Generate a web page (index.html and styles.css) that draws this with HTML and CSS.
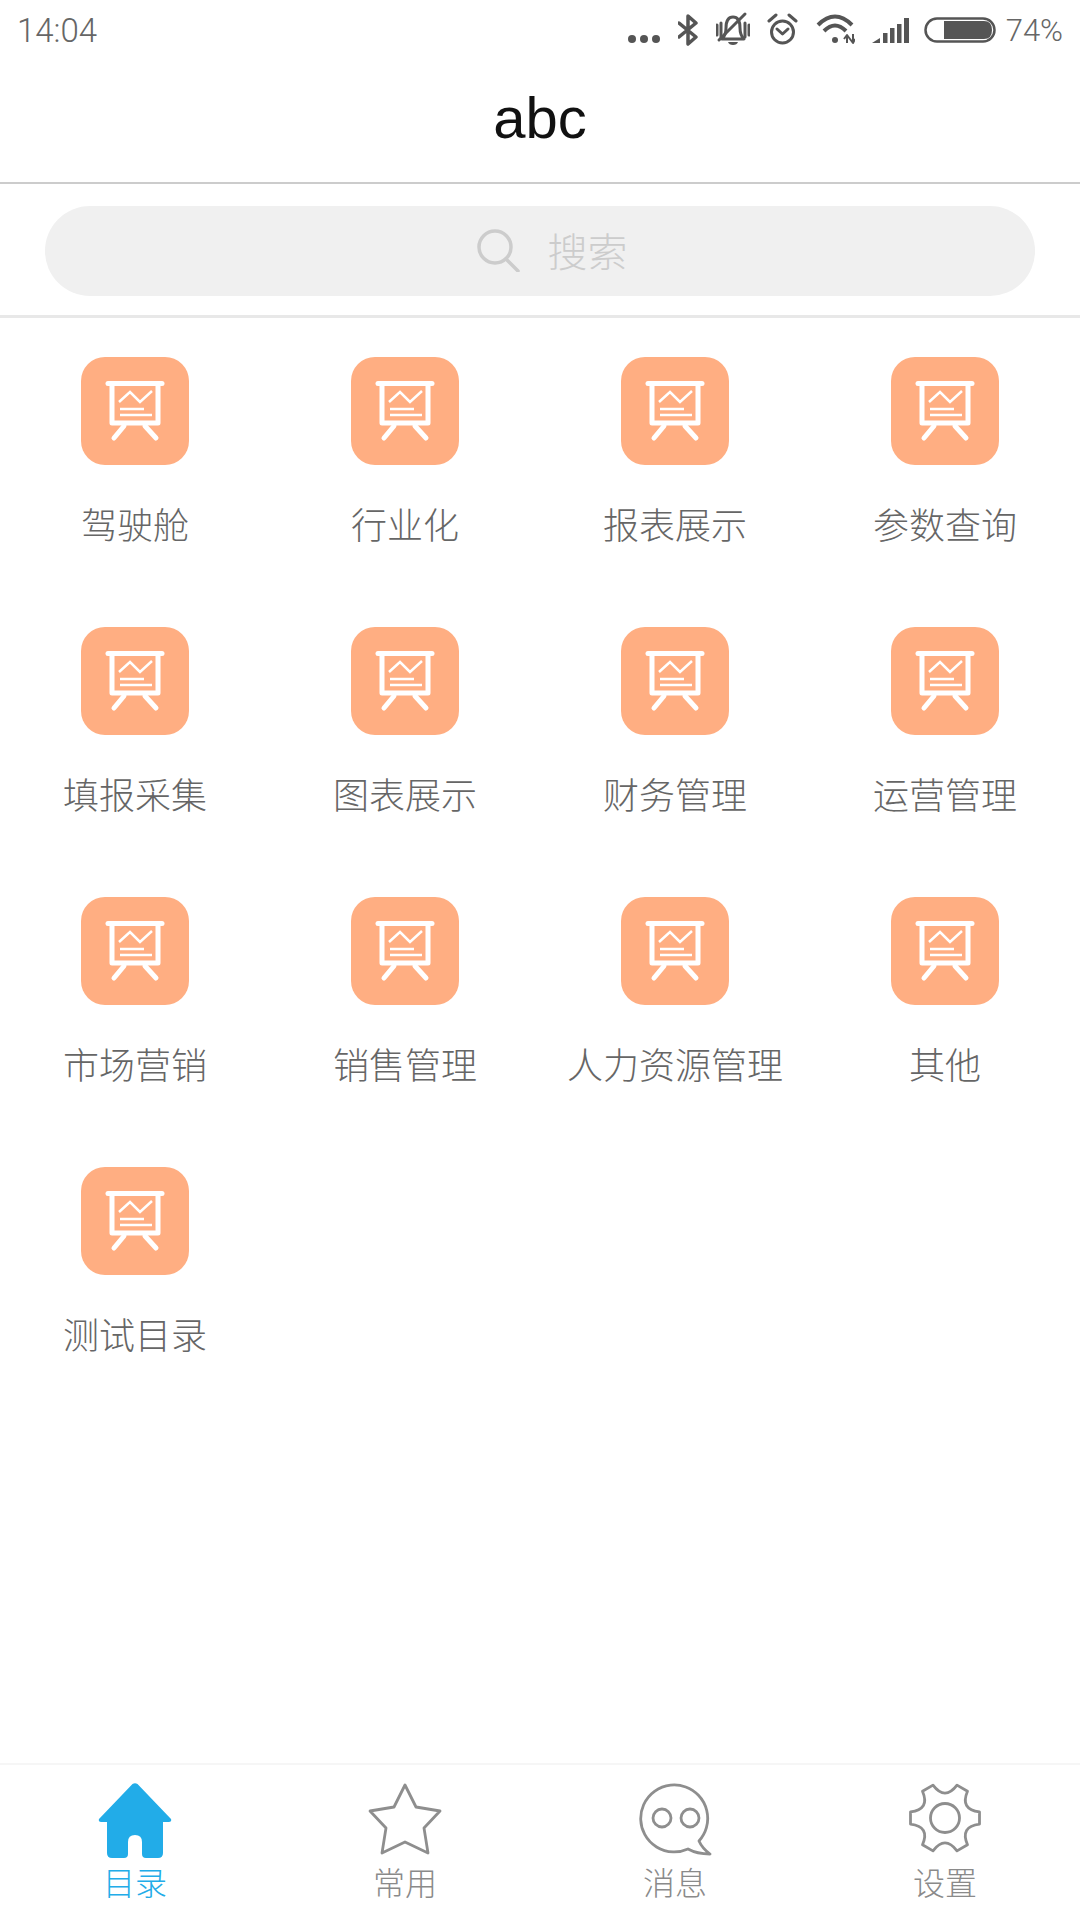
FILE: index.html
```html
<!DOCTYPE html>
<html lang="zh">
<head>
<meta charset="utf-8">
<title>abc</title>
<link rel="stylesheet" href="styles.css">
</head>
<body>
<svg class="defs" width="0" height="0" aria-hidden="true">
  <symbol id="board" viewBox="0 0 108 108">
    <path class="b-thick" d="M27 26.500H81"/>
    <path class="b-thick" d="M31 27V66H77V27"/>
    <path class="b-thick" d="M43 69L33 81M64 69L75 81"/>
    <path class="b-thin" d="M38 45L49 35L59 45L71 34"/>
    <path class="b-thin" d="M39 52H63M39 58H71"/>
  </symbol>
</svg>
<div class="app">
  <div class="status">
    <span class="time">14:04</span>
    <div class="status-icons">
      <svg class="si dots" width="32" height="60" viewBox="0 0 32 60"><circle cx="4" cy="39" r="4"/><circle cx="16" cy="39" r="4"/><circle cx="28" cy="39" r="4"/></svg>
      <svg class="si line bt" width="20" height="60" viewBox="0 0 20 60"><path d="M1 23L18 37L10 44V16L18 23L1 37"/></svg>
      <svg class="si line thin" width="34" height="60" viewBox="0 0 34 60"><path d="M6 39Q10 35 10 28Q10 17 17 17Q24 17 24 28Q24 35 28 39Z"/><path d="M3 40L29 14"/><path d="M1 25V35M33 25V35M5 23V37M29 23V37"/><path class="solid" d="M12 42H22Q21 45 17 45Q13 45 12 42Z"/></svg>
      <svg class="si line thin alarm" width="31" height="60" viewBox="0 0 31 60"><circle cx="15.5" cy="32" r="11"/><path d="M2 21L9 15M22 15L29 21"/><path d="M10 29L15.5 34L21 29"/></svg>
      <svg class="si line wifi" width="39" height="60" viewBox="0 0 39 60"><path d="M2 25Q19 8 36 25"/><path d="M8 31Q19 20 30 31"/><circle class="solid" cx="19" cy="40" r="3"/><path class="arrows" d="M31 35V43M37 34V43M28 39L31 35L34 39M34 39L37 43L39 39"/></svg>
      <svg class="si" width="37" height="60" viewBox="0 0 37 60"><path d="M0 43L8 38V43Z"/><rect x="11" y="33" width="4.5" height="10"/><rect x="18" y="28" width="4.5" height="15"/><rect x="25" y="24" width="4.5" height="19"/><rect x="32" y="18" width="5" height="25"/></svg>
      <div class="batt">
        <svg class="si" width="72" height="60" viewBox="0 0 72 60"><rect class="batt-shell" x="1.5" y="18.5" width="69" height="23" rx="11.5"/><path d="M20 21H60Q68 21 68 30Q68 39 60 39H20Z"/></svg>
        <span class="pct">74%</span>
      </div>
    </div>
  </div>

  <header class="title-bar">abc</header>

  <div class="search-wrap">
    <div class="search">
      <svg class="search-icon" width="43" height="43" viewBox="0 0 43 43"><circle cx="18" cy="18" r="16"/><path d="M29 30L41 42"/></svg>
      <span class="search-text">搜索</span>
    </div>
  </div>

  <main class="grid">
    <a class="cell"><span class="tile"><svg class="board"><use href="#board"/></svg></span><span class="label">驾驶舱</span></a>
    <a class="cell"><span class="tile"><svg class="board"><use href="#board"/></svg></span><span class="label">行业化</span></a>
    <a class="cell"><span class="tile"><svg class="board"><use href="#board"/></svg></span><span class="label">报表展示</span></a>
    <a class="cell"><span class="tile"><svg class="board"><use href="#board"/></svg></span><span class="label">参数查询</span></a>
    <a class="cell"><span class="tile"><svg class="board"><use href="#board"/></svg></span><span class="label">填报采集</span></a>
    <a class="cell"><span class="tile"><svg class="board"><use href="#board"/></svg></span><span class="label">图表展示</span></a>
    <a class="cell"><span class="tile"><svg class="board"><use href="#board"/></svg></span><span class="label">财务管理</span></a>
    <a class="cell"><span class="tile"><svg class="board"><use href="#board"/></svg></span><span class="label">运营管理</span></a>
    <a class="cell"><span class="tile"><svg class="board"><use href="#board"/></svg></span><span class="label">市场营销</span></a>
    <a class="cell"><span class="tile"><svg class="board"><use href="#board"/></svg></span><span class="label">销售管理</span></a>
    <a class="cell"><span class="tile"><svg class="board"><use href="#board"/></svg></span><span class="label">人力资源管理</span></a>
    <a class="cell"><span class="tile"><svg class="board"><use href="#board"/></svg></span><span class="label">其他</span></a>
    <a class="cell"><span class="tile"><svg class="board"><use href="#board"/></svg></span><span class="label">测试目录</span></a>
  </main>

  <nav class="tabs">
    <a class="tab active">
      <svg class="tab-icon" width="74" height="76" viewBox="-1 0 74 76"><path class="fill" d="M33.5 1Q36 -.5 38.500 1L72 36Q73 39 70 39H64V70Q64 75 59 75H47Q43 75 43 71V59Q43 52 36 52Q29 52 29 59V71Q29 75 25 75H13Q8 75 8 70V39H2Q-1 39 0 36Z"/></svg>
      <span class="tab-label">目录</span>
    </a>
    <a class="tab">
      <svg class="tab-icon" width="74" height="76" viewBox="-1 0 74 76"><path class="stroke" d="M36 2L47 24L71 28L55 45L59 70L36 59L13 70L17 45L1 28L25 24Z"/></svg>
      <span class="tab-label">常用</span>
    </a>
    <a class="tab">
      <svg class="tab-icon" width="74" height="76" viewBox="-4 0 74 76"><path class="stroke" d="M46 66A33.500 33.500 0 1 1 57 58Q60 65 68 71Q55 71 46 66Z"/><circle class="stroke" cx="20" cy="35" r="9"/><circle class="stroke" cx="48" cy="35" r="9"/></svg>
      <span class="tab-label">消息</span>
    </a>
    <a class="tab">
      <svg class="tab-icon" width="74" height="76" viewBox="-1 0 74 76"><path class="stroke" d="M70.500 28.900L70.500 41.100Q50.700 43.500 58.500 61.800L48 67.900Q36 52 24 67.900L13.500 61.800Q21.300 43.500 1.500 41.100L1.500 28.900Q21.300 26.500 13.500 8.200L24 2.100Q36 18 48 2.100L58.500 8.200Q50.700 26.500 70.500 28.900Z"/><circle class="stroke" cx="36" cy="35" r="14.500"/></svg>
      <span class="tab-label">设置</span>
    </a>
  </nav>
</div>
</body>
</html>
```

FILE: styles.css
```css
* { box-sizing: border-box; }
html, body { margin: 0; padding: 0; background: #fff; }
body { font-family: "Liberation Sans", "Noto Sans CJK SC", sans-serif; }
.defs { position: absolute; }
.app { width: 1080px; height: 1920px; display: flex; flex-direction: column; background: #fff; }

.status { height: 60px; display: flex; align-items: center; justify-content: space-between; padding: 0 17px; color: #666; }
.time { font-family: "Roboto", sans-serif; font-weight: 300; font-size: 33px; }
.status-icons { display: flex; align-items: center; gap: 17px; }
.si { display: block; fill: #555; }
.dots { margin-right: 1px; }
.bt { margin-right: 1px; }
.alarm { margin-right: 1px; }
.line { fill: none; stroke: #555; stroke-width: 3.5; stroke-linejoin: round; stroke-linecap: round; }
.thin { stroke-width: 3; }
.wifi { stroke-width: 4; stroke-linecap: butt; }
.arrows { stroke-width: 2; }
.solid { fill: #555; stroke: none; }
.batt { display: flex; align-items: center; gap: 10px; margin-left: -2px; }
.batt-shell { fill: none; stroke: #555; stroke-width: 2.5; }
.pct { font-family: "Roboto", sans-serif; font-weight: 300; font-size: 31px; }

.title-bar { height: 124px; padding-bottom: 8px; display: flex; align-items: center; justify-content: center; font-family: "Liberation Sans", sans-serif; font-size: 58px; color: #111; border-bottom: 2px solid #ccc; }

.search-wrap { height: 134px; padding: 22px 45px 0; border-bottom: 3px solid #e8e8e8; }
.search { height: 90px; border-radius: 45px; background: #f0f0f0; display: flex; align-items: center; justify-content: center; gap: 28px; padding-left: 24px; }
.search-icon { fill: none; stroke: #ccc; stroke-width: 3.5; stroke-linecap: round; margin-top: -1px; }
.search-text { font-size: 40px; font-weight: 300; color: #ccc; margin-top: -3px; }

.grid { flex: 1; display: grid; grid-template-columns: repeat(4, 270px); grid-auto-rows: 270px; }
.cell { display: flex; flex-direction: column; align-items: center; padding-top: 39px; }
.tile { width: 108px; height: 108px; border-radius: 24px; background: #ffae82; display: block; }
.board { display: block; width: 108px; height: 108px; }
.b-thick { fill: none; stroke: #fff; stroke-width: 5; stroke-linecap: round; stroke-linejoin: round; }
.b-thin { fill: none; stroke: #fff; stroke-width: 2.5; }
.label { margin-top: 40px; font-size: 36px; line-height: 44px; font-weight: 300; color: #666; white-space: nowrap; }

.tabs { height: 157px; border-top: 2px solid #f6f6f6; display: grid; grid-template-columns: repeat(4, 270px); }
.tab { display: flex; flex-direction: column; align-items: center; padding-top: 18px; color: #8a8a8a; }
.tab.active { color: #22ace8; }
.tab-icon { display: block; }
.stroke { fill: none; stroke: #8e8e8e; stroke-width: 2.8; stroke-linejoin: round; }
.fill { fill: #22ace8; }
.tab-label { margin-top: 3px; font-size: 32px; line-height: 44px; font-weight: 300; }
```
